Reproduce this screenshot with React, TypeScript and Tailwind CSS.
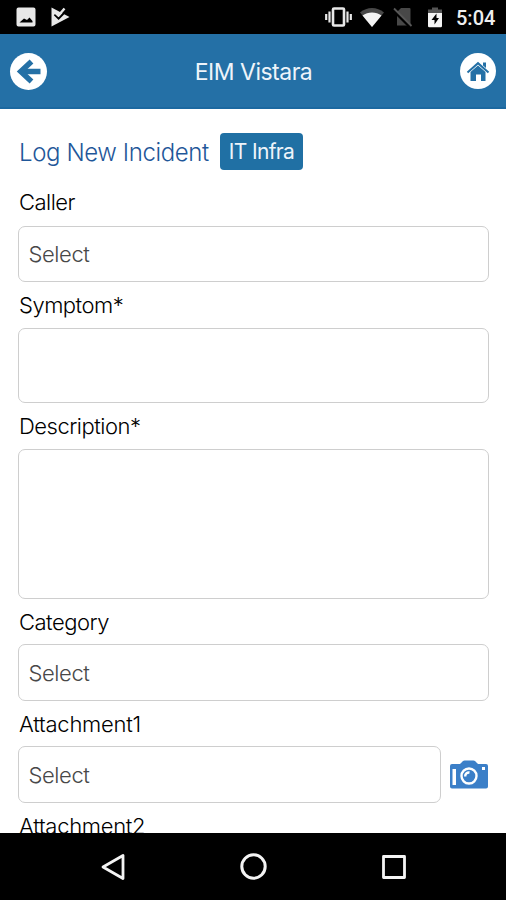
import React from 'react'

interface FieldProps {
    label: string
    labelClass: string
    boxClass: string
    placeholder?: string
    children?: React.ReactNode
}

const Field: React.FC<FieldProps> = ({ label, labelClass, boxClass, placeholder, children }) => {
    return (
        <div className="shrink-0">
            <label className={`flex items-center text-[22px] font-light text-black ${labelClass}`}>
                {label}
            </label>
            <div className="flex items-center">
                <div className={`flex flex-1 items-center rounded-[7px] border border-[#cecece] px-[9.5px] text-[22px] font-light tracking-[-0.4px] text-[#484848] ${boxClass}`}>
                    {placeholder}
                </div>
                {children}
            </div>
        </div>
    )
}

const StatusBar = () => {
    return (
        <div className="flex h-[34px] shrink-0 items-center bg-black pr-[11px] pl-4">
            <svg width="20" height="20" viewBox="0 0 20 20">
                <path fillRule="evenodd" fill="#e8e8e8" d="M2.5 .5h15a2 2 0 0 1 2 2v15a2 2 0 0 1-2 2h-15a2 2 0 0 1-2-2v-15a2 2 0 0 1 2-2zM3.500 15.500h13v-1.500l-3-3.500-2.500 2.500-3-1.500z" />
            </svg>
            <svg className="ml-[14px]" width="20" height="20" viewBox="0 0 20 20">
                <path fill="#e8e8e8" d="M1.500 .5 19.500 10 1.500 19.500z" />
                <path fill="none" stroke="#000" strokeWidth="2" d="M4.500 7.500 8.600 11.500 16.500 3.500" />
                <path fill="none" stroke="#e8e8e8" strokeWidth="2.400" d="M4 4.500 8.500 8.500 14.500 1.500" />
            </svg>
            <div className="flex-1" />
            <svg width="27" height="20" viewBox="0 0 27 20" fill="none" stroke="#e8e8e8">
                <rect x="8" y="1.500" width="11" height="17" rx="1" strokeWidth="2.600" />
                <path strokeWidth="2.200" d="M4.500 4.500v11M22.500 4.500v11M1.200 7v6M25.800 7v6" />
            </svg>
            <svg className="ml-[7px]" width="26" height="20" viewBox="0 0 26 20">
                <path fill="#484848" d="M1 5.500C8-.5 18-.5 25 5.500L13 20z" />
                <path fill="#f4f4f4" d="M3.500 8.500c5.500-4 13.500-4 19 0L13 20z" />
            </svg>
            <svg className="ml-[8px]" width="20" height="20" viewBox="0 0 20 20">
                <path fill="#484848" d="M8 1h8.500a1 1 0 0 1 1 1v16.500H4V5z" />
                <path stroke="#000" strokeWidth="3.500" d="M1 3.500 17.500 20" />
                <path stroke="#585858" strokeWidth="1.800" d="M1 1.500 18.500 19" />
            </svg>
            <svg className="ml-[14px]" width="16" height="21" viewBox="0 0 16 21">
                <path fill="#555" d="M1 6V2.500h4V.5h6v2h4V6z" />
                <path fill="#f4f4f4" d="M1 6h14v13a1.200 1.200 0 0 1-1.200 1.200H2.200A1.200 1.200 0 0 1 1 19z" />
                <path fill="#000" d="M9.500 6.500 4.500 13h3v4.500l4.500-6.500h-2.500z" />
            </svg>
            <span className="ml-[13px] w-[39px] pt-[2px] text-right font-[Roboto,sans-serif] text-[20px] leading-none font-medium whitespace-nowrap text-[#eee]">5:04</span>
        </div>
    )
}

const Header = () => {
    return (
        <div className="flex h-[75px] shrink-0 items-center justify-between border-b-2 border-[#1b68a0] bg-[#2470a6] px-[10px] pt-px">
            <button className="flex size-[37px] items-center justify-center rounded-full bg-white">
                <svg width="37" height="37" viewBox="0 0 37 37" fill="none" stroke="#2470a6">
                    <path strokeWidth="5.500" d="M11 18.500h19.500" />
                    <path strokeWidth="5.500" d="m21.500 8.500-10.700 10 10.700 10" />
                </svg>
            </button>
            <h1 className="pt-[3px] text-[23px] font-normal tracking-[-0.5px] text-[#eef4fa]">EIM Vistara</h1>
            <button className="flex size-[36px] items-center justify-center rounded-full bg-white">
                <svg width="36" height="36" viewBox="0 0 36 36">
                    <path fill="#2470a6" d="m18 12.500 7.500 6.500v9h-4.500v-6.500h-5v6.500h-5.500v-9z" />
                    <path fill="none" stroke="#2470a6" strokeWidth="2" d="m7.500 19.500 10.500-9.300 10.500 9.300" />
                    <path fill="#2470a6" d="M23 9.500h3v5.500l-3-2.500z" />
                </svg>
            </button>
        </div>
    )
}

const CameraIcon = () => {
    return (
        <svg className="mr-px mb-px ml-[9px] shrink-0" width="38" height="29" viewBox="0 0 38 29">
            <path fill="#3b7fc8" d="M2 4h8l3-3a3 3 0 0 1 1.500-.5h9A3 3 0 0 1 25 1l3 3h8a2 2 0 0 1 2 2v20.500a2 2 0 0 1-2 2H2a2 2 0 0 1-2-2V6a2 2 0 0 1 2-2z" />
            <rect x="2.500" y="9" width="3.500" height="16" fill="#fff" />
            <rect x="32" y="7" width="3" height="3" fill="#fff" />
            <circle cx="19" cy="16" r="7.500" fill="none" stroke="#fff" strokeWidth="2.400" />
            <path fill="none" stroke="#fff" strokeWidth="2.400" d="M15.200 16.500a3.800 3.800 0 0 1 4.300-4" />
        </svg>
    )
}

const NavBar = () => {
    return (
        <div className="flex h-[67px] shrink-0 items-center justify-between bg-black pr-[98px] pl-[99px]">
            <svg width="28" height="28" viewBox="0 0 28 28" fill="none" stroke="#f4f4f4" strokeWidth="2.800" strokeLinejoin="round">
                <path d="M24 2.500v23L4 14z" />
            </svg>
            <svg width="28" height="28" viewBox="0 0 28 28" fill="none" stroke="#f4f4f4" strokeWidth="3">
                <circle cx="13.500" cy="13.500" r="11.700" />
            </svg>
            <svg width="28" height="28" viewBox="0 0 28 28" fill="none" stroke="#f4f4f4" strokeWidth="2.800" strokeLinejoin="round">
                <rect x="3.500" y="3.500" width="21" height="21" />
            </svg>
        </div>
    )
}

const App: React.FC = () => {
    return (
        <div className="flex h-[900px] w-[506px] flex-col overflow-hidden bg-white font-[Inter,sans-serif]">
            <StatusBar />
            <Header />
            <main className="flex min-h-0 flex-1 flex-col overflow-hidden pt-6 pr-[17px] pl-[18px]">
                <div className="flex h-[37px] shrink-0 items-center pl-px">
                    <h2 className="w-[201px] pt-[2px] text-[24px] font-light tracking-[-0.4px] whitespace-nowrap text-[#1f5799]">Log New Incident</h2>
                    <button className="h-[37px] w-[83px] rounded-[4px] bg-[#2070a4] text-[21px] font-normal tracking-[-0.65px] whitespace-nowrap text-[#eef4fa]">
                        IT Infra
                    </button>
                </div>
                <Field label="Caller" labelClass="h-[56px] pt-[9px] pl-px tracking-[-0.5px]" boxClass="h-[56px]" placeholder="Select" />
                <Field label="Symptom*" labelClass="h-[46px] pl-px tracking-[-0.5px]" boxClass="h-[75px]" />
                <Field label="Description*" labelClass="h-[46px] pl-px tracking-[-0.5px]" boxClass="h-[150px]" />
                <Field label="Category" labelClass="h-[45px] pt-px pl-px tracking-[-0.5px]" boxClass="h-[57px] pt-[2px]" placeholder="Select" />
                <Field label="Attachment1" labelClass="h-[45px] pt-px pl-px tracking-[-0.25px]" boxClass="h-[57px] pt-[2px]" placeholder="Select">
                    <CameraIcon />
                </Field>
                <div className="h-[46px] shrink-0 pl-px text-[22px] leading-[46px] font-light tracking-[-0.3px] text-black">Attachment2</div>
            </main>
            <NavBar />
        </div>
    )
}

export default App
